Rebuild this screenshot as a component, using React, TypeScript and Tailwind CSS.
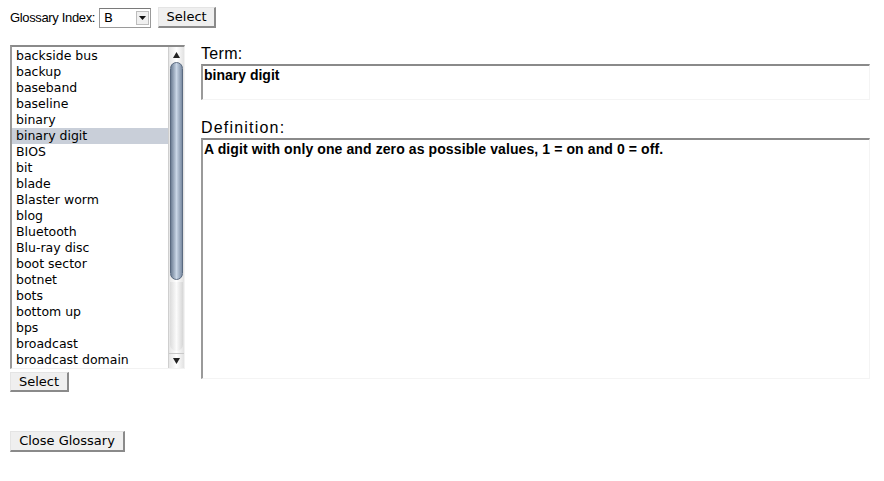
import React from "react";

const items = [
  "backside bus",
  "backup",
  "baseband",
  "baseline",
  "binary",
  "binary digit",
  "BIOS",
  "bit",
  "blade",
  "Blaster worm",
  "blog",
  "Bluetooth",
  "Blu-ray disc",
  "boot sector",
  "botnet",
  "bots",
  "bottom up",
  "bps",
  "broadcast",
  "broadcast domain",
];

function Btn({ children, className = "" }: { children: React.ReactNode; className?: string }) {
  return (
    <div
      className={
        "flex items-center justify-center bg-[#efefef] border-t border-l border-t-[#e4e4e4] border-l-[#e4e4e4] border-r-2 border-b-2 border-r-[#8a8a8a] border-b-[#8a8a8a] text-[13px] text-black " +
        className
      }
      style={{ fontFamily: '"DejaVu Sans", sans-serif' }}
    >
      {children}
    </div>
  );
}

export default function App() {
  return (
    <div
      className="w-[884px] h-[481px] bg-white relative overflow-hidden text-black"
      style={{ fontFamily: '"Liberation Sans", Arial, sans-serif' }}
    >
      {/* top row */}
      <div className="flex items-center pl-[10px] pt-[7px] h-[28px]">
        <span className="text-[13px] tracking-[-0.35px]">Glossary Index:</span>
        <div className="ml-[4px] w-[52px] h-[20px] border border-[#9a9a9a] border-t-[#7a7a7a] bg-white flex items-center relative">
          <span className="ml-[4px] text-[13px]" style={{ fontFamily: '"DejaVu Sans", sans-serif' }}>
            B
          </span>
          <div className="absolute right-[1px] top-[2px] w-[13px] h-[14px] bg-[#f0f0f0] border border-[#bdbdbd] flex items-center justify-center">
            <svg width="7" height="4" viewBox="0 0 7 4">
              <polygon points="0,0 7,0 3.5,4" fill="#111" />
            </svg>
          </div>
        </div>
        <Btn className="ml-[7px] w-[58px] h-[21px]">Select</Btn>
      </div>

      <div className="flex mt-[17px] pl-[10px]">
        {/* left column */}
        <div className="flex flex-col w-[175px]">
          <div className="w-[175px] h-[324px] border-t-2 border-l-2 border-t-[#8a8a8a] border-l-[#9a9a9a] border-r border-b border-r-[#f2f2f2] border-b-[#f2f2f2] flex">
            <div className="flex-1 pt-[1px]" style={{ fontFamily: '"DejaVu Sans", sans-serif' }}>
              {items.map((it) => (
                <div
                  key={it}
                  className={
                    "h-[16px] leading-[16px] pl-[4px] text-[12.5px] whitespace-nowrap " +
                    (it === "binary digit" ? "bg-[#c9cfd9]" : "")
                  }
                >
                  {it}
                </div>
              ))}
            </div>
            {/* scrollbar */}
            <div className="w-[16px] flex flex-col bg-gradient-to-r from-[#e6e6e6] via-[#ffffff] to-[#e2e2e2] border-l border-[#cfcfcf]">
              <div className="h-[15px] flex items-center justify-center">
                <svg width="7" height="6" viewBox="0 0 7 6">
                  <polygon points="3.5,0 7,6 0,6" fill="#222" />
                </svg>
              </div>
              <div className="mx-[1px] h-[218px] rounded-[7px] bg-gradient-to-r from-[#6e7f95] via-[#c9d6e6] to-[#7b8ca3] border border-[#5a6a80]" />
              <div className="flex-1 mx-[1px] my-[2px] rounded-b-[7px] bg-gradient-to-r from-[#dcdcdc] via-[#fbfbfb] to-[#d6d6d6]" />
              <div className="h-[15px] flex items-center justify-center border-t border-[#c8c8c8]">
                <svg width="7" height="6" viewBox="0 0 7 6">
                  <polygon points="0,0 7,0 3.5,6" fill="#222" />
                </svg>
              </div>
            </div>
          </div>
          <Btn className="mt-[3px] w-[59px] h-[20px]">Select</Btn>
        </div>

        {/* right column */}
        <div className="ml-[16px] flex flex-col w-[669px]">
          <div className="text-[16px] leading-[18px] h-[18px] tracking-[0.3px]">Term:</div>
          <div className="mt-[1px] h-[36px] border-t-2 border-l-2 border-t-[#8a8a8a] border-l-[#9a9a9a] border-r border-b border-r-[#f4f4f4] border-b-[#f4f4f4] px-[1px] pt-[1px]">
            <div className="text-[14px] font-bold leading-[16px]">binary digit</div>
          </div>
          <div className="mt-[19px] text-[16px] leading-[18px] h-[18px] tracking-[1.2px]">Definition:</div>
          <div className="mt-[1px] h-[241px] border-t-2 border-l-2 border-t-[#8a8a8a] border-l-[#9a9a9a] border-r border-b border-r-[#f4f4f4] border-b-[#f4f4f4] px-[1px] pt-[1px]">
            <div className="text-[14px] font-bold leading-[16px] tracking-[0.1px]">
              A digit with only one and zero as possible values, 1 = on and 0 = off.
            </div>
          </div>
        </div>
      </div>

      <div className="pl-[10px] mt-[39px]">
        <Btn className="w-[115px] h-[21px]">Close Glossary</Btn>
      </div>
    </div>
  );
}
